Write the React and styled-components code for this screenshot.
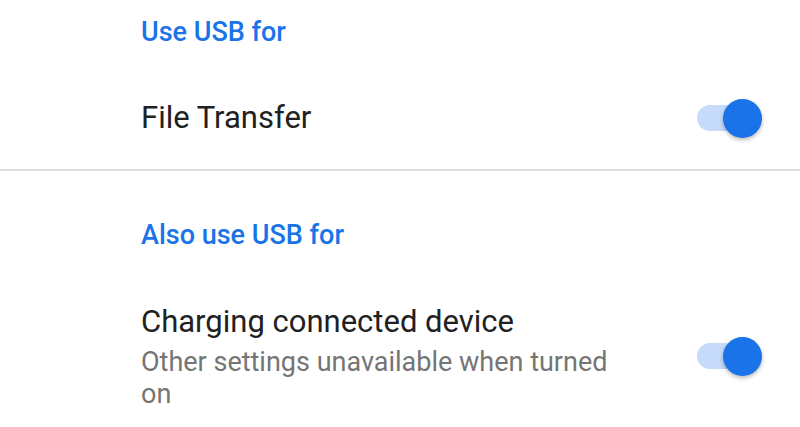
import React from "react";
import styled, { createGlobalStyle } from "styled-components";

const Global = createGlobalStyle`
  html, body {
    margin: 0;
    padding: 0;
    background: #ffffff;
    font-family: Roboto, "Noto Sans", "Liberation Sans", sans-serif;
  }
`;

const Page = styled.div`
  width: 800px;
  height: 427px;
  overflow: hidden;
  background: #fff;
`;

const Section = styled.section`
  border-bottom: ${(p) => (p.$divider ? "2px solid #dcdcdc" : "none")};
`;

const Header = styled.div`
  padding: ${(p) => p.$top}px 0 0 141px;
  font-size: 27px;
  line-height: 40px;
  font-weight: 500;
  color: #1a73e8;
`;

const Row = styled.div`
  display: flex;
  align-items: center;
  padding: ${(p) => p.$top}px 38px ${(p) => p.$bottom}px 141px;
`;

const Texts = styled.div`
  flex: 1;
  padding-right: 70px;
`;

const Title = styled.div`
  font-size: 31px;
  line-height: ${(p) => p.$lh}px;
  color: #212121;
`;

const Summary = styled.div`
  margin-top: 4px;
  font-size: 27px;
  line-height: 32px;
  color: #757575;
`;

const Track = styled.div`
  position: relative;
  width: 60px;
  height: 26px;
  margin-right: 5px;
  border-radius: 13px;
  background: #c6dafc;
`;

const Thumb = styled.div`
  position: absolute;
  top: 50%;
  right: -5px;
  width: 39px;
  height: 39px;
  margin-top: -19.5px;
  border-radius: 50%;
  background: #1a73e8;
  box-shadow: 0 2px 4px rgba(0, 0, 0, 0.28);
`;

function Toggle() {
  return (
    <Track>
      <Thumb />
    </Track>
  );
}

export default function App() {
  return (
    <Page>
      <Global />
      <Section $divider>
        <Header $top={12}>Use USB for</Header>
        <Row $top={48} $bottom={33}>
          <Texts>
            <Title $lh={36}>File Transfer</Title>
          </Texts>
          <Toggle />
        </Row>
      </Section>
      <Section>
        <Header $top={44}>Also use USB for</Header>
        <Row $top={47} $bottom={20}>
          <Texts>
            <Title $lh={40}>Charging connected device</Title>
            <Summary>Other settings unavailable when turned on</Summary>
          </Texts>
          <Toggle />
        </Row>
      </Section>
    </Page>
  );
}
